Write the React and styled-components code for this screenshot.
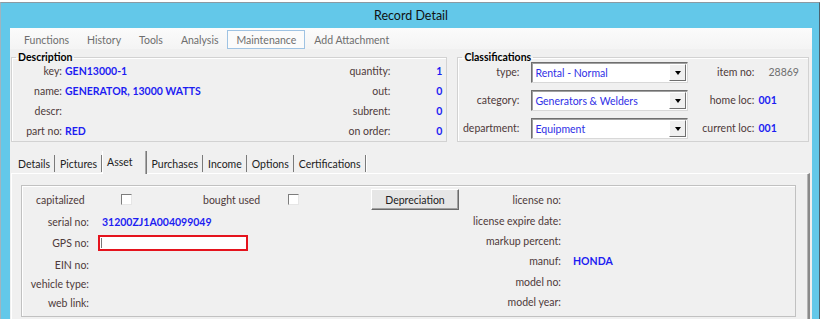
import React from 'react'
import styled, { createGlobalStyle } from 'styled-components'

const GlobalStyle = createGlobalStyle`
  html, body {
    margin: 0;
    padding: 0;
    background: #fff;
  }
  body {
    font-family: Lato, "Liberation Sans", sans-serif;
    font-size: 10.5px;
  }
`

const Window = styled.div`
  box-sizing: border-box;
  width: 820px;
  height: 317px;
  margin-top: 2px;
  background: #63c8e9;
  border-top: 1px solid #8c9aa2;
  border-left: 1px solid #9fb4bf;
  border-right: 1px solid #4c6470;
  padding: 0 7px 0 9px;
  display: flex;
  flex-direction: column;
  overflow: hidden;
`

const TitleBar = styled.div`
  flex-shrink: 0;
  height: 25px;
  display: flex;
  align-items: center;
  justify-content: center;
  font-size: 12.5px;
  color: #111;
`

const Client = styled.div`
  flex: 1;
  min-height: 0;
  background: #f0f0f0;
  display: flex;
  flex-direction: column;
`

const MenuBar = styled.div`
  flex-shrink: 0;
  height: 21px;
  box-sizing: border-box;
  padding: 2px 0 0 5px;
  background: linear-gradient(#fbfbfb, #f4f4f4);
  display: flex;
  align-items: flex-start;
`

const MenuItem = styled.div`
  height: 19px;
  box-sizing: border-box;
  padding: 0 8px;
  display: flex;
  align-items: center;
  color: #6e6e6e;
  border: 1px solid ${p => (p.$active ? '#9fc3e3' : 'transparent')};
  background: ${p => (p.$active ? '#fbfbfb' : 'transparent')};
`

const TopRow = styled.div`
  flex-shrink: 0;
  display: flex;
  align-items: flex-start;
  gap: 10px;
  padding: 2px 3px 0 1px;
`

const Group = styled.fieldset`
  margin: 0;
  padding: 0;
  min-width: 0;
  width: ${p => p.$width}px;
  box-sizing: border-box;
  border: 1px solid #d2d2d2;
  box-shadow: inset 1px 1px #fff;

  legend {
    font-weight: bold;
    color: #000;
    padding: 0 2px;
    margin-left: 4px;
    line-height: 13px;
  }
`

const DescGrid = styled.div`
  display: grid;
  grid-template-columns: 50px 1fr 80px 52px;
  grid-auto-rows: 20px;
  align-items: center;
  margin-top: -3px;
  padding-right: 4px;
`

const Label = styled.span`
  color: #4e3a3a;
  text-align: right;
  white-space: nowrap;
`

const Value = styled.span`
  color: #1d1df2;
  font-weight: bold;
  white-space: nowrap;
  padding-left: ${p => p.$pad || 0}px;
  text-align: ${p => (p.$right ? 'right' : 'left')};
`

const Plain = styled.span`
  color: #6e6e6e;
  padding-left: 10px;
`

const ClassGrid = styled.div`
  display: grid;
  grid-template-columns: 61px 169px 70px 1fr;
  grid-template-rows: 28px 28px 21px;
  align-items: start;
  margin-top: -2px;
  padding-bottom: 2px;

  & > span {
    line-height: 21px;
  }
`

const SelectBox = styled.div`
  box-sizing: border-box;
  height: 21px;
  margin-left: 12px;
  display: flex;
  align-items: stretch;
  background: #fff;
  border: 1px solid;
  border-color: #6f6f6f #d8d8d8 #d8d8d8 #6f6f6f;
  box-shadow: inset 1px 1px #a0a0a0;
`

const SelectText = styled.span`
  flex: 1;
  padding-left: 3px;
  display: flex;
  align-items: center;
  color: #2f2fe6;
`

const SelectArrow = styled.span`
  width: 15px;
  margin: 1px;
  display: flex;
  align-items: center;
  justify-content: center;
  background: #f0f0f0;
  border: 1px solid;
  border-color: #fff #6f6f6f #6f6f6f #fff;

  &::after {
    content: '';
    border-left: 3.5px solid transparent;
    border-right: 3.5px solid transparent;
    border-top: 4px solid #000;
  }
`

const ClassLabel = styled(Label)`
  padding-right: 4px;
`

const TabStrip = styled.div`
  flex-shrink: 0;
  display: flex;
  align-items: flex-end;
  height: 31px;
  padding-left: 3px;
`

const Tab = styled.div`
  height: ${p => (p.$selected ? '23px' : '17px')};
  box-sizing: border-box;
  padding: ${p => (p.$selected ? '0 13px 2px 4px' : '0 4px 0 5px')};
  margin-bottom: ${p => (p.$selected ? '-1px' : '1px')};
  display: flex;
  align-items: center;
  color: #222;
  background: #f0f0f0;
  position: relative;
  z-index: ${p => (p.$selected ? 1 : 0)};
  border-right: 1px solid #7a7a7a;
  border-left: ${p => (p.$selected ? '1px solid #fff' : 'none')};
  box-shadow: ${p => (p.$selected ? 'inset -1px 0 #a9a9a9' : '1px 0 #fff')};
`

const Panel = styled.div`
  flex: 1;
  margin: 0 2px 0 1px;
  padding: 11px 12px 0 9px;
  border-top: 1px solid #fff;
  border-left: 1px solid #fff;
  border-right: 2px solid #8a8a8a;
  box-shadow: inset -1px 0 #b5b5b5;
`

const AssetBox = styled.div`
  display: flex;
  height: 132px;
  box-sizing: border-box;
  border: 1px solid #c1c1c1;
  box-shadow: inset 1px 1px #fff;
`

const LeftCol = styled.div`
  width: 438px;
  display: grid;
  grid-template-columns: 67px 1fr;
  grid-template-rows: 27px 18px 23px 22px 16px 22px;
  column-gap: 9px;
  align-items: center;
`

const CheckRow = styled.div`
  grid-column: 1 / -1;
  display: flex;
  align-items: center;
  padding-left: 14px;
`

const CheckLabel = styled(Label)`
  width: 85px;
  text-align: left;
`

const Check = styled.span`
  width: 11px;
  height: 11px;
  box-sizing: border-box;
  background: #fff;
  border: 1px solid;
  border-color: #7d7d7d #e6e6e6 #e6e6e6 #7d7d7d;
  margin-right: ${p => p.$gap}px;
`

const Button = styled.div`
  width: 88px;
  height: 21px;
  box-sizing: border-box;
  display: flex;
  align-items: center;
  justify-content: center;
  color: #222;
  background: #e6e6e6;
  border: 1px solid;
  border-color: #fff #6a6a6a #6a6a6a #fff;
  box-shadow: inset -1px -1px #a0a0a0;
`

const TextInput = styled.div`
  width: 150px;
  height: 16px;
  box-sizing: border-box;
  background: #fff;
  border: 2px solid #e5131d;
  display: flex;
  align-items: center;
  padding-left: 1px;

  &::before {
    content: '';
    width: 1px;
    height: 10px;
    background: #777;
  }
`

const RightCol = styled.div`
  flex: 1;
  display: grid;
  grid-template-columns: 101px 1fr;
  grid-template-rows: 20px 21px 19px 21px 21px 19px;
  column-gap: 12px;
  align-items: center;
  padding-top: 4px;
`

const desc = [
  ['key:', 'GEN13000-1', 'quantity:', '1'],
  ['name:', 'GENERATOR, 13000 WATTS', 'out:', '0'],
  ['descr:', '', 'subrent:', '0'],
  ['part no:', 'RED', 'on order:', '0'],
]

const classes = [
  ['type:', 'Rental - Normal', 'item no:', '28869', true],
  ['category:', 'Generators & Welders', 'home loc:', '001'],
  ['department:', 'Equipment', 'current loc:', '001'],
]

const tabs = ['Details', 'Pictures', 'Asset', 'Purchases', 'Income', 'Options', 'Certifications']

const rightRows = [
  ['license no:', ''],
  ['license expire date:', ''],
  ['markup percent:', ''],
  ['manuf:', 'HONDA'],
  ['model no:', ''],
  ['model year:', ''],
]

export default function App() {
  return (
    <>
      <GlobalStyle />
      <Window>
        <TitleBar>Record Detail</TitleBar>
        <Client>
          <MenuBar>
            {['Functions', 'History', 'Tools', 'Analysis', 'Maintenance', 'Add Attachment'].map(m => (
              <MenuItem key={m} $active={m === 'Maintenance'}>{m}</MenuItem>
            ))}
          </MenuBar>

          <TopRow>
            <Group $width={437}>
              <legend>Description</legend>
              <DescGrid>
                {desc.map(([l, v, l2, v2]) => (
                  <React.Fragment key={l}>
                    <Label>{l}</Label>
                    <Value $pad={3}>{v}</Value>
                    <Label>{l2}</Label>
                    <Value $right>{v2}</Value>
                  </React.Fragment>
                ))}
              </DescGrid>
            </Group>
            <Group $width={352}>
              <legend>Classifications</legend>
              <ClassGrid>
                {classes.map(([l, v, l2, v2, plain]) => (
                  <React.Fragment key={l}>
                    <Label>{l}</Label>
                    <SelectBox>
                      <SelectText>{v}</SelectText>
                      <SelectArrow />
                    </SelectBox>
                    <ClassLabel>{l2}</ClassLabel>
                    {plain ? <Plain>{v2}</Plain> : <Value>{v2}</Value>}
                  </React.Fragment>
                ))}
              </ClassGrid>
            </Group>
          </TopRow>

          <TabStrip>
            {tabs.map(t => (
              <Tab key={t} $selected={t === 'Asset'}>{t}</Tab>
            ))}
          </TabStrip>

          <Panel>
            <AssetBox>
              <LeftCol>
                <CheckRow>
                  <CheckLabel>capitalized</CheckLabel>
                  <Check $gap={71} />
                  <CheckLabel>bought used</CheckLabel>
                  <Check $gap={72} />
                  <Button>Depreciation</Button>
                </CheckRow>
                <Label>serial no:</Label>
                <Value $pad={4}>31200ZJ1A004099049</Value>
                <Label>GPS no:</Label>
                <TextInput />
                <Label>EIN no:</Label>
                <span />
                <Label>vehicle type:</Label>
                <span />
                <Label>web link:</Label>
                <span />
              </LeftCol>
              <RightCol>
                {rightRows.map(([l, v]) => (
                  <React.Fragment key={l}>
                    <Label>{l}</Label>
                    <Value>{v}</Value>
                  </React.Fragment>
                ))}
              </RightCol>
            </AssetBox>
          </Panel>
        </Client>
      </Window>
    </>
  )
}
